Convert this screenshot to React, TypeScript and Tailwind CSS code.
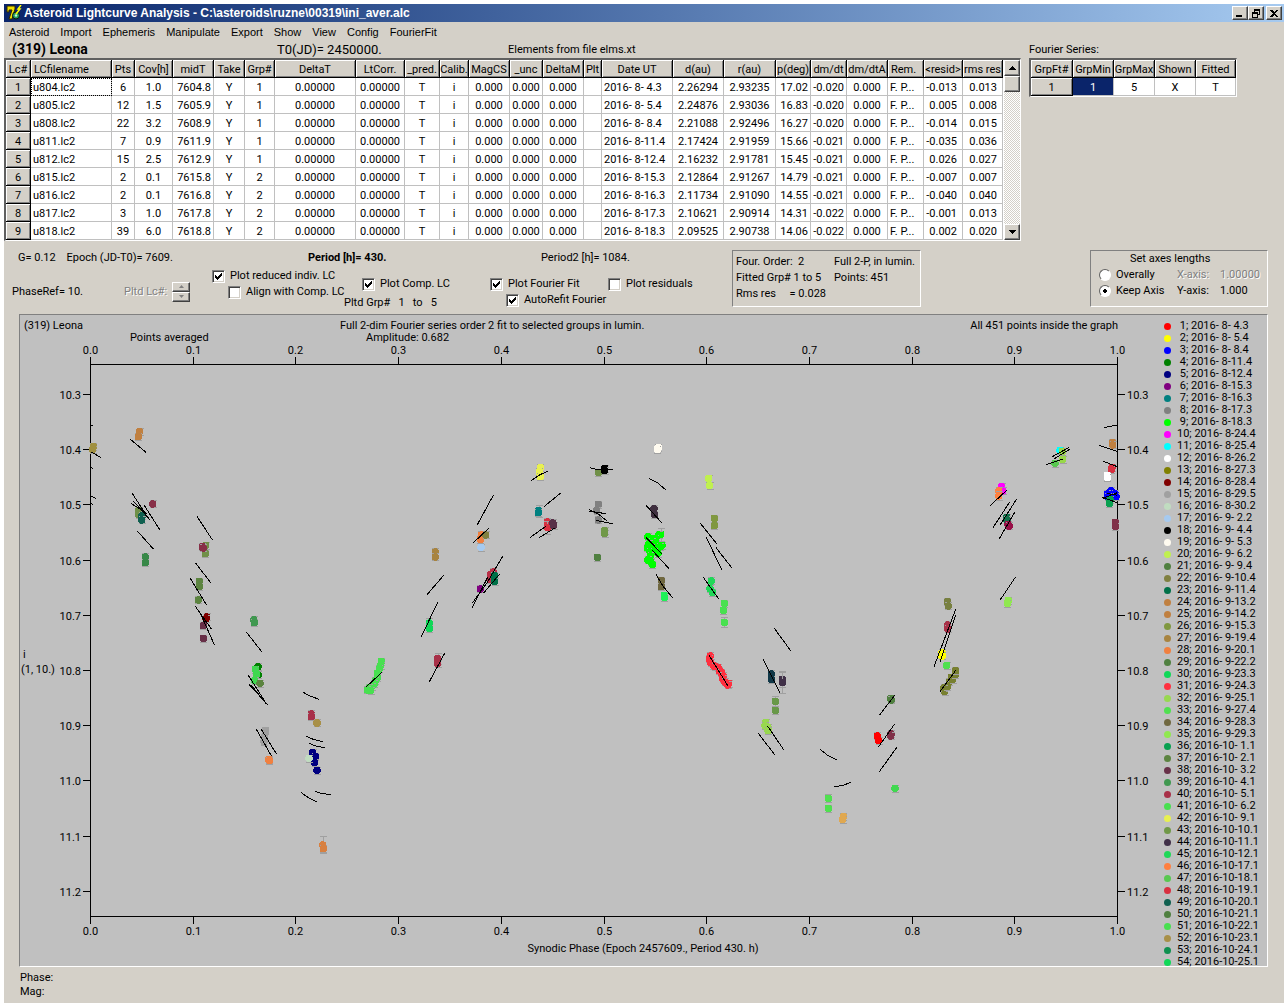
import React from 'react';

type Dot = [number, number, string, number?];
type Line = number[];

/* ---------- lightcurve table ---------- */

const headers = [
  'Lc#', 'LCfilename', 'Pts', 'Cov[h]', 'midT', 'Take', 'Grp#', 'DeltaT', 'LtCorr.', '_pred.', 'Calib.', 'MagCS',
  '_unc', 'DeltaM', 'Plt', 'Date UT', 'd(au)', 'r(au)', 'p(deg)', 'dm/dt', 'dm/dtA', 'Rem.', '<resid>', 'rms res',
];
const colWidths = [25, 81, 23, 38, 41, 31, 30, 81, 49, 35, 29, 41, 33, 41, 18, 71, 51, 52, 35, 36, 41, 36, 39, 40];

const lcRows = [
  ['u804.lc2', '6', '1.0', '7604.8', '1', '2016- 8- 4.3', '2.26294', '2.93235', '17.02', '-0.020', '-0.013', '0.013'],
  ['u805.lc2', '12', '1.5', '7605.9', '1', '2016- 8- 5.4', '2.24876', '2.93036', '16.83', '-0.020', '0.005', '0.008'],
  ['u808.lc2', '22', '3.2', '7608.9', '1', '2016- 8- 8.4', '2.21088', '2.92496', '16.27', '-0.020', '-0.014', '0.015'],
  ['u811.lc2', '7', '0.9', '7611.9', '1', '2016- 8-11.4', '2.17424', '2.91959', '15.66', '-0.021', '-0.035', '0.036'],
  ['u812.lc2', '15', '2.5', '7612.9', '1', '2016- 8-12.4', '2.16232', '2.91781', '15.45', '-0.021', '0.026', '0.027'],
  ['u815.lc2', '2', '0.1', '7615.8', '2', '2016- 8-15.3', '2.12864', '2.91267', '14.79', '-0.021', '-0.007', '0.007'],
  ['u816.lc2', '2', '0.1', '7616.8', '2', '2016- 8-16.3', '2.11734', '2.91090', '14.55', '-0.021', '-0.040', '0.040'],
  ['u817.lc2', '3', '1.0', '7617.8', '2', '2016- 8-17.3', '2.10621', '2.90914', '14.31', '-0.022', '-0.001', '0.013'],
  ['u818.lc2', '39', '6.0', '7618.8', '2', '2016- 8-18.3', '2.09525', '2.90738', '14.06', '-0.022', '0.002', '0.020'],
].map(([file, pts, cov, mid, grp, date, d, r, p, dm, resid, rms], i) => [
  String(i + 1), file, pts, cov, mid, 'Y', grp, '0.00000', '0.00000', 'T', 'i', '0.000', '0.000', '0.000', '',
  date, d, r, p, dm, '0.000', 'F. P...', resid, rms,
]);

const cellAlign = (c: number) => {
  if (c === 1 || c === 15 || c === 21) return 'text-left pl-[2px]';
  if (c === 4 || c === 18 || c === 19) return 'text-right pr-[2px]';
  if (c === 22 || c === 23) return 'text-right pr-[5px]';
  return 'text-center';
};

const fixedCell =
  'overflow-hidden whitespace-nowrap border-r border-b border-black bg-[#d4d0c8] p-0 pt-[2px] text-center font-normal shadow-[inset_1px_1px_#fff,inset_-1px_-1px_#808080]';
const dataCell = 'overflow-hidden whitespace-nowrap border-r border-b border-[#c0c0c0] bg-white p-0 pt-[2px]';
const raised = 'border border-t-white border-l-white border-r-[#404040] border-b-[#404040] bg-[#d4d0c8] shadow-[inset_-1px_-1px_#808080]';

function LightcurveTable() {
  return (
    <div className="flex border-t-2 border-l-2 border-r border-b border-t-[#606060] border-l-[#606060] border-r-white border-b-white bg-white">
      <table className="table-fixed border-separate border-spacing-0 leading-[15px]">
        <colgroup>
          {colWidths.map((w, i) => (
            <col key={i} style={{ width: w }} />
          ))}
        </colgroup>
        <thead>
          <tr className="h-[18px]">
            {headers.map((h, c) => (
              <th key={h} scope="col" className={fixedCell}>
                <span className={c === 1 || c === 21 ? 'block pl-[3px] text-left' : ''}>{h}</span>
              </th>
            ))}
          </tr>
        </thead>
        <tbody>
          {lcRows.map((row, r) => (
            <tr key={r} className="h-[18px]">
              {row.map((v, c) =>
                c === 0 ? (
                  <th key={c} scope="row" className={fixedCell}>
                    {v}
                  </th>
                ) : (
                  <td key={c} className={`${dataCell} ${cellAlign(c)} ${r === 0 && c === 1 ? 'outline-1 -outline-offset-1 outline-dotted outline-black' : ''}`}>
                    {v}
                  </td>
                ),
              )}
            </tr>
          ))}
        </tbody>
      </table>
      <div className="ml-px flex w-4 flex-col bg-[repeating-conic-gradient(#fff_0_25%,#d4d0c8_0_50%)] bg-[length:2px_2px]">
        <button aria-label="Scroll up" className={`flex h-4 items-center justify-center ${raised}`}>
          <svg width="7" height="4" shapeRendering="crispEdges"><path d="M0 4L3.5 0L7 4z" /></svg>
        </button>
        <div className={`h-4 ${raised}`} />
        <button aria-label="Scroll down" className={`mt-auto flex h-4 items-center justify-center ${raised}`}>
          <svg width="7" height="4" shapeRendering="crispEdges"><path d="M0 0L3.5 4L7 0z" /></svg>
        </button>
      </div>
    </div>
  );
}

function FourierTable() {
  const widths = [42, 41, 41, 41, 40];
  return (
    <div className="w-fit border-t-2 border-l-2 border-r border-b border-t-[#606060] border-l-[#606060] border-r-white border-b-white">
      <table aria-label="Fourier Series" className="table-fixed border-separate border-spacing-0 leading-[15px]">
        <colgroup>
          {widths.map((w, i) => (
            <col key={i} style={{ width: w }} />
          ))}
        </colgroup>
        <thead>
          <tr className="h-[18px]">
            {['GrpFt#', 'GrpMin', 'GrpMax', 'Shown', 'Fitted'].map((h) => (
              <th key={h} scope="col" className={fixedCell}>{h}</th>
            ))}
          </tr>
        </thead>
        <tbody>
          <tr className="h-[18px]">
            <th scope="row" className={fixedCell}>1</th>
            <td className="border-r border-b border-[#c0c0c0] bg-[#0a246a] p-0 pt-[2px] text-center text-white">1</td>
            {['5', 'X', 'T'].map((v) => (
              <td key={v} className={`${dataCell} text-center`}>{v}</td>
            ))}
          </tr>
        </tbody>
      </table>
    </div>
  );
}

/* ---------- controls ---------- */

function Check({ label, checked = false, className = '' }: { label: string; checked?: boolean; className?: string }) {
  return (
    <label className={`flex h-4 items-center gap-[5px] whitespace-nowrap ${className}`}>
      <span className="relative size-[13px]">
        <input
          type="checkbox"
          defaultChecked={checked}
          className="peer block size-[13px] appearance-none border border-t-[#808080] border-l-[#808080] border-r-white border-b-white bg-white shadow-[inset_1px_1px_#404040,inset_-1px_-1px_#d4d0c8]"
        />
        <svg className="pointer-events-none absolute top-[3px] left-[3px] hidden peer-checked:block" width="7" height="7" shapeRendering="crispEdges">
          <path d="M0 2h1v1h1v1h1v-1h1v-1h1v-1h1v-1h1v3h-1v1h-1v1h-1v1h-1v1h-1v-1h-1v-1h-1z" />
        </svg>
      </span>
      {label}
    </label>
  );
}

function Radio({ label, checked = false }: { label: string; checked?: boolean }) {
  return (
    <label className="flex w-[78px] items-center gap-[5px]">
      <input
        type="radio"
        name="axes"
        defaultChecked={checked}
        className="size-3 appearance-none rounded-full border border-t-[#606060] border-l-[#606060] border-r-white border-b-white bg-white checked:bg-[radial-gradient(#000_2px,#fff_2px)]"
      />
      {label}
    </label>
  );
}

function Controls() {
  return (
    <section className="flex items-start pt-[9px] pb-[3px]">
      <div className="flex-1">
        <div className="flex h-4 leading-4 whitespace-pre">
          <span className="ml-[14px] w-[290px]">G= 0.12    Epoch (JD-T0)= 7609.</span>
          <b className="w-[233px]">Period [h]= 430.</b>
          <span>Period2 [h]= 1084.</span>
        </div>
        <div className="mt-[2px] flex leading-4">
          <div className="ml-2 flex w-[200px] items-center pt-1">
            <span className="w-28">PhaseRef= 10.</span>
            <span className="w-12 text-[#808080] [text-shadow:1px_1px_#fff]">Pltd Lc#:</span>
            <span className="flex flex-col">
              <button disabled aria-label="Next lightcurve" className={`flex h-[10px] w-[18px] items-center justify-center ${raised}`}>
                <svg width="5" height="3"><path d="M0 3L2.5 0L5 3z" fill="#808080" /></svg>
              </button>
              <button disabled aria-label="Previous lightcurve" className={`flex h-[10px] w-[18px] items-center justify-center ${raised}`}>
                <svg width="5" height="3"><path d="M0 0L2.5 3L5 0z" fill="#808080" /></svg>
              </button>
            </span>
          </div>
          <div className="w-[132px]">
            <Check label="Plot reduced indiv. LC" checked />
            <Check label="Align with Comp. LC" className="ml-4" />
          </div>
          <div className="w-[146px] pt-2">
            <Check label="Plot Comp. LC" checked className="ml-[18px]" />
            <div className="pt-[3px] whitespace-pre">Pltd Grp#   1   to   5</div>
          </div>
          <div className="w-[118px] pt-2">
            <Check label="Plot Fourier Fit" checked />
            <Check label="AutoRefit Fourier" checked className="ml-4" />
          </div>
          <div className="pt-2">
            <Check label="Plot residuals" />
          </div>
        </div>
      </div>
      <div className="mr-[169px] grid h-[57px] w-[189px] grid-cols-[98px_1fr] content-start border border-t-[#808080] border-l-[#808080] border-r-white border-b-white pt-[3px] pl-[3px] leading-4 whitespace-pre">
        <span>Four. Order:  2</span>
        <span>Full 2-P, in lumin.</span>
        <span>Fitted Grp# 1 to 5</span>
        <span>Points: 451</span>
        <span>Rms res     = 0.028</span>
      </div>
      <fieldset className="mr-4 h-[57px] w-[178px] border border-t-[#808080] border-l-[#808080] border-r-white border-b-white pl-2 leading-4">
        <div className="pl-[31px]">Set axes lengths</div>
        <div className="flex text-[#808080] [text-shadow:1px_1px_#fff]">
          <span className="text-black [text-shadow:none]"><Radio label="Overally" /></span>
          <span className="w-[43px]">X-axis:</span>1.00000
        </div>
        <div className="flex">
          <Radio label="Keep Axis" checked />
          <span className="w-[43px]">Y-axis:</span>1.000
        </div>
      </fieldset>
    </section>
  );
}

/* ---------- chart data ---------- */

// Points and curves are digitised in thirds of a pixel relative to the corner of each plot sector.
const sectors: { x: number; y: number; dots: Dot[]; lines: Line[] }[] = [
  {
    x: 10, y: 310,
    dots: [
      [389, 365, '#c08040'], [385, 380, '#c08040'], [250, 410, '#a09040'], [248, 418, '#a09040'], [428, 582, '#883048'],
      [386, 602, '#709048'], [386, 614, '#709048'], [396, 618, '#106050'], [395, 630, '#106050'], [406, 741, '#388848'],
      [406, 758, '#388848'], [587, 706, '#709048'], [586, 731, '#709048'], [577, 710, '#883048'], [580, 714, '#883048'],
    ],
    lines: [
      [361, 388, 409, 428], [242, 425, 272, 442], [242, 346, 248, 346], [242, 473, 249, 475], [242, 558, 257, 565],
      [242, 578, 249, 584], [366, 549, 419, 631], [363, 580, 411, 611], [370, 573, 416, 625], [402, 585, 449, 659],
      [382, 663, 431, 718], [561, 619, 608, 691],
    ],
  },
  {
    x: 10, y: 560,
    dots: [
      [568, 64, '#5c8440'], [568, 79, '#5c8440'], [565, 120, '#5c8440'], [590, 171, '#800000'], [588, 176, '#800000'],
      [580, 197, '#683048'], [580, 235, '#683048'], [731, 180, '#409850'], [733, 188, '#409850'], [744, 320, '#008000'],
      [744, 345, '#008000'], [736, 328, '#40d850'], [740, 343, '#40d850'], [734, 362, '#40d850'], [750, 370, '#5c8440'],
      [904, 462, '#a83048'], [904, 470, '#a83048'], [921, 489, '#a89048'], [766, 512, '#a0a0a0'], [764, 530, '#a0a0a0'],
      [762, 545, '#a0a0a0'], [776, 598, '#f08040'], [778, 602, '#f08040'], [908, 578, '#000080'], [916, 590, '#000080'],
      [914, 608, '#000080'], [921, 631, '#000080'], [897, 595, '#c0dcc0'], [938, 855, '#d88040', 26], [940, 866, '#d88040'],
    ],
    lines: [
      [556, 8, 602, 68], [541, 55, 590, 136], [556, 139, 605, 208], [570, 158, 614, 256], [709, 216, 755, 275],
      [715, 346, 762, 420], [718, 374, 773, 434], [724, 376, 768, 430], [880, 397, 900, 408, 927, 418],
      [888, 529, 910, 538, 938, 545], [897, 550, 920, 559, 944, 563], [739, 508, 785, 589], [754, 508, 800, 583],
      [873, 697, 895, 713, 920, 725], [916, 694, 936, 701, 962, 703],
    ],
  },
  {
    x: 340, y: 400,
    dots: [
      [601, 203, '#e8f050'], [598, 215, '#e8f050'], [601, 230, '#e8f050'], [596, 332, '#008080', 18], [595, 338, '#008080'],
      [622, 366, '#d83040'], [622, 382, '#d83040', 20], [638, 369, '#583048'], [641, 376, '#583048'], [286, 456, '#a88440'],
      [286, 471, '#a88440'], [424, 405, '#f08040'], [421, 418, '#f08040'], [437, 405, '#808040'], [423, 442, '#a6caf0'],
      [460, 516, '#b83048'], [452, 524, '#b83048'], [450, 538, '#b83048'], [463, 527, '#007048'], [464, 545, '#007048'],
      [421, 567, '#800080'], [268, 669, '#10d858', 16], [268, 685, '#10d858'], [293, 776, '#a83048', 16], [293, 790, '#a83048'],
      [124, 784, '#48e050'], [122, 796, '#48e050'], [118, 806, '#48e050'], [112, 820, '#48e050'], [112, 832, '#48e050'],
      [106, 842, '#48e050'], [102, 852, '#48e050'], [95, 860, '#48e050'], [86, 864, '#48e050'], [82, 870, '#48e050'],
      [92, 872, '#48e050'], [775, 313, '#808080'], [770, 332, '#808080'], [775, 360, '#808080'], [775, 217, '#709048'],
      [794, 205, '#000'], [794, 212, '#000'], [794, 392, '#709848'], [794, 400, '#709848'], [772, 472, '#508040'],
    ],
    lines: [
      [412, 374, 461, 284], [400, 428, 446, 385], [261, 584, 311, 526], [244, 710, 293, 607], [268, 845, 314, 760],
      [79, 860, 126, 817], [396, 623, 444, 530], [397, 609, 440, 550, 488, 469], [430, 580, 479, 522],
      [573, 242, 600, 224, 623, 214], [612, 320, 662, 279], [570, 413, 617, 379], [597, 413, 645, 384],
      [750, 203, 768, 208, 818, 209], [747, 333, 797, 341], [747, 328, 775, 342, 800, 362], [768, 361, 818, 371],
    ],
  },
  {
    x: 580, y: 400,
    dots: [
      [235, 143, '#fffbf0'], [232, 148, '#fffbf0'], [386, 235, '#c0f050'], [389, 257, '#c0f050'], [222, 326, '#403040'],
      [223, 343, '#403040'], [403, 355, '#809840'], [403, 377, '#809840'], [204, 411, '#0f0'], [242, 403, '#0f0', 20],
      [236, 405, '#0f0'], [225, 415, '#0f0'], [216, 425, '#0f0'], [206, 432, '#0f0'], [228, 430, '#0f0'], [202, 443, '#0f0'],
      [214, 442, '#0f0'], [246, 436, '#0f0'], [240, 440, '#0f0'], [210, 455, '#0f0'], [222, 455, '#0f0'], [234, 460, '#0f0'],
      [212, 468, '#0f0'], [204, 480, '#0f0'], [212, 485, '#0f0'], [217, 493, '#0f0'], [244, 541, '#706840'],
      [244, 560, '#706840'], [253, 586, '#20f058'], [253, 592, '#20f058'], [394, 543, '#20d858'], [390, 566, '#20d858'],
      [397, 577, '#20d858'], [433, 610, '#48e050'], [430, 631, '#48e050'], [433, 667, '#48e050', 15], [391, 768, '#ff3040'],
      [388, 776, '#ff3040'], [392, 788, '#ff3040'], [400, 796, '#ff3040'], [406, 800, '#ff3040'], [414, 802, '#ff3040'],
      [418, 812, '#ff3040'], [424, 818, '#ff3040'], [430, 828, '#ff3040'], [428, 836, '#ff3040'], [434, 846, '#ff3040'],
      [446, 850, '#ff3040'], [443, 855, '#ff3040'], [574, 822, '#103848'], [574, 838, '#103848'], [607, 838, '#403048', 22],
      [607, 847, '#403048', 33],
    ],
    lines: [
      [207, 235, 232, 248, 257, 269], [198, 316, 245, 368], [361, 370, 410, 431], [379, 412, 425, 509], [408, 443, 455, 503],
      [199, 413, 245, 461], [216, 450, 267, 506], [228, 523, 250, 560, 278, 593], [370, 532, 416, 597], [387, 766, 444, 858],
      [583, 685, 632, 752], [550, 778, 600, 879],
    ],
  },
  {
    x: 580, y: 640,
    dots: [
      [586, 184, '#689848', 15], [586, 211, '#689848'], [557, 247, '#98d850'], [555, 257, '#98d850'], [564, 262, '#98d850'],
      [564, 272, '#98d850'], [745, 475, '#50e050', 12], [745, 505, '#50e050'], [790, 530, '#e0a850'], [788, 538, '#e0a850'],
    ],
    lines: [
      [535, 280, 584, 344], [562, 257, 611, 329], [720, 328, 742, 345, 770, 359], [762, 440, 790, 436, 812, 427],
    ],
  },
  {
    x: 830, y: 380,
    dots: [
      [515, 320, '#f0f'], [518, 333, '#f0f'], [506, 333, '#ff8040'], [506, 348, '#ff8040', 14], [530, 412, '#107048'],
      [531, 420, '#107048'], [534, 433, '#981048'], [537, 438, '#981048'], [690, 211, '#0ff'], [697, 214, '#98d848'],
      [698, 238, '#98d848'], [675, 250, '#58c850'], [847, 188, '#c08040'], [848, 195, '#c08040'], [846, 262, '#d83040'],
      [844, 268, '#d83040'], [832, 286, '#fff'], [832, 292, '#fff'], [843, 332, '#00f'], [832, 342, '#00f'], [855, 342, '#00f'],
      [845, 350, '#00f'], [835, 350, '#00f'], [858, 350, '#00f'], [840, 358, '#08a050'], [838, 370, '#08a050'],
      [856, 427, '#803048'], [856, 439, '#803048'], [535, 661, '#90e850'], [532, 670, '#90e850'], [352, 665, '#788040'],
      [355, 678, '#788040'],
    ],
    lines: [
      [480, 377, 530, 331], [489, 443, 539, 366], [511, 434, 560, 357], [508, 476, 554, 397], [511, 659, 556, 592],
      [648, 254, 698, 237], [667, 230, 716, 203], [673, 236, 719, 208], [822, 143, 838, 139, 862, 136],
      [808, 196, 862, 214], [820, 244, 862, 260], [816, 352, 862, 368], [818, 355, 862, 338], [830, 340, 862, 346],
    ],
  },
  {
    x: 830, y: 590,
    dots: [
      [353, 105, '#a83048'], [353, 117, '#a83048'], [336, 188, '#ff0'], [336, 198, '#ff0'], [350, 226, '#50e050'],
      [344, 304, '#788030'], [342, 294, '#788030'], [352, 290, '#788030'], [358, 276, '#788030'], [364, 262, '#788030'],
      [368, 268, '#788030'], [376, 254, '#788030'], [376, 242, '#788030'], [182, 325, '#508040'], [184, 330, '#508040'],
      [142, 438, '#f00'], [146, 452, '#f00'], [183, 432, '#803048'], [182, 438, '#803048'], [195, 595, '#40d850'],
    ],
    lines: [[312, 230, 377, 58], [330, 215, 377, 74], [330, 305, 378, 240], [148, 376, 194, 316], [146, 470, 194, 402], [148, 545, 202, 470]],
  },
];

const third = (o: number, v: number) => o + v / 3;

function PlotMarks() {
  return (
    <>
      {sectors.map((s, i) => (
        <g key={i}>
          {s.dots.map(([x, y, c, e = 11], k) => (
            <g key={k} shapeRendering="crispEdges">
              <path
                d={`M${Math.round(third(s.x, x)) - 3} ${Math.round(third(s.y, y - e)) + 0.5}h7m-7 ${Math.round((2 * e) / 3)}h7m-3.5 0v-${Math.round((2 * e) / 3)}`}
                stroke="#a0a0a0"
                fill="none"
              />
              <circle cx={third(s.x, x)} cy={third(s.y, y)} r="3.8" fill={c} />
            </g>
          ))}
        </g>
      ))}
      {sectors.map((s, i) => (
        <g key={i} stroke="#000" fill="none" shapeRendering="crispEdges">
          {s.lines.map((l, k) => (
            <polyline key={k} points={l.map((v, j) => third(j % 2 ? s.y : s.x, v)).join(' ')} />
          ))}
        </g>
      ))}
    </>
  );
}

function Chart() {
  const xs = Array.from({ length: 11 }, (_, i) => Math.round(90 + i * 102.7) + 0.5);
  const ys = Array.from({ length: 10 }, (_, i) => Math.round(394 + i * 55.2) + 0.5);
  return (
    <svg viewBox="20 315 1140 650" className="min-w-0 flex-1" fontSize="11" role="img" aria-label="Composite lightcurve">
      <text x="24" y="329">(319) Leona</text>
      <text x="130" y="341">Points averaged</text>
      <text x="340" y="329">Full 2-dim Fourier series order 2 fit to selected groups in lumin.</text>
      <text x="366" y="341">Amplitude: 0.682</text>
      <text x="1118" y="329" textAnchor="end">All 451 points inside the graph</text>
      <text x="23" y="658">i</text>
      <text x="21" y="673">(1, 10.)</text>
      <text x="643" y="952" textAnchor="middle">Synodic Phase (Epoch 2457609., Period 430. h)</text>
      <path d="M90.5 357V924M1117.5 357V924M90 364.5H1118M90 916.5H1118" stroke="#000" fill="none" shapeRendering="crispEdges" />
      {xs.map((x, i) => (
        <g key={i} textAnchor="middle">
          <path d={`M${x} 357v7M${x} 917v7`} stroke="#000" shapeRendering="crispEdges" />
          <text x={x} y="354">{(i / 10).toFixed(1)}</text>
          <text x={x} y="935">{(i / 10).toFixed(1)}</text>
        </g>
      ))}
      {ys.map((y, i) => (
        <g key={i}>
          <path d={`M83 ${y}h7M1118 ${y}h7`} stroke="#000" shapeRendering="crispEdges" />
          <text x="81" y={y + 4} textAnchor="end">{(10.3 + i / 10).toFixed(1)}</text>
          <text x="1127" y={y + 4}>{(10.3 + i / 10).toFixed(1)}</text>
        </g>
      ))}
      <PlotMarks />
    </svg>
  );
}

const legend: [string, string][] = [
  ['8- 4.3', '#ff0000'], ['8- 5.4', '#ffff00'], ['8- 8.4', '#0000ff'], ['8-11.4', '#008000'], ['8-12.4', '#000080'],
  ['8-15.3', '#800080'], ['8-16.3', '#008080'], ['8-17.3', '#808080'], ['8-18.3', '#00ff00'], ['8-24.4', '#ff00ff'],
  ['8-25.4', '#00ffff'], ['8-26.2', '#ffffff'], ['8-27.3', '#808000'], ['8-28.4', '#800000'], ['8-29.5', '#a0a0a0'],
  ['8-30.2', '#c0dcc0'], ['9- 2.2', '#a6caf0'], ['9- 4.4', '#000000'], ['9- 5.3', '#fffbf0'], ['9- 6.2', '#c0f050'],
  ['9- 9.4', '#508040'], ['9-10.4', '#808040'], ['9-11.4', '#007048'], ['9-13.2', '#c08040'], ['9-14.2', '#c08040'],
  ['9-15.3', '#809840'], ['9-19.4', '#a88440'], ['9-20.1', '#f08040'], ['9-22.2', '#508040'], ['9-23.3', '#10d858'],
  ['9-24.3', '#ff3040'], ['9-25.1', '#98d850'], ['9-27.4', '#50e050'], ['9-28.3', '#706840'], ['9-29.3', '#90e850'],
  ['10- 1.1', '#08a050'], ['10- 2.1', '#5c8440'], ['10- 3.2', '#683048'], ['10- 4.1', '#409850'], ['10- 5.1', '#a83048'],
  ['10- 6.2', '#48e050'], ['10- 9.1', '#e8f050'], ['10-10.1', '#709848'], ['10-11.1', '#403048'], ['10-12.1', '#20d858'],
  ['10-17.1', '#ff8040'], ['10-18.1', '#58c850'], ['10-19.1', '#d83040'], ['10-20.1', '#106050'], ['10-21.1', '#508040'],
  ['10-22.1', '#48e050'], ['10-23.1', '#a89048'], ['10-24.1', '#109050'], ['10-25.1', '#10d858'],
];

function Legend() {
  return (
    <ol className="-mb-[2px] w-[107px] shrink-0 pt-[5px]">
      {legend.map(([date, color], i) => (
        <li key={i} className="flex h-3 items-center gap-[6px] pl-1 leading-3 whitespace-pre">
          <svg width="7" height="7"><circle cx="3.5" cy="3.5" r="3.5" fill={color} /></svg>
          {`${i < 9 ? ' ' : ''}${i + 1}; 2016-${date.startsWith('1') ? '' : ' '}${date}`}
        </li>
      ))}
    </ol>
  );
}

/* ---------- window ---------- */

const menu = ['Asteroid', 'Import', 'Ephemeris', 'Manipulate', 'Export', 'Show', 'View', 'Config', 'FourierFit'];

function AppIcon() {
  return (
    <svg width="16" height="16" viewBox="0 0 16 16">
      <path d="M1 1h8v3L6 14H3L6 5H3v2H1z" fill="#f0e000" stroke="#302800" />
      <circle cx="10" cy="10.5" r="3.5" fill="#20a060" stroke="#101010" />
      <circle cx="10" cy="10.5" r="1.2" fill="#c8f0d0" />
      <path d="M15 0l-3 4h2l-4 5" fill="none" stroke="#ff0" strokeWidth="1.5" />
    </svg>
  );
}

export default function App() {
  const winBtn = `flex h-[14px] w-4 items-center justify-center ${raised}`;
  return (
    <div className="min-h-screen bg-white px-1 pt-1 font-[Roboto,'Liberation_Sans',sans-serif] text-[11px] text-black">
      <div className="bg-[#d4d0c8] pb-1">
        <header className="flex h-[18px] items-center gap-[2px] bg-gradient-to-r from-[#0a246a] to-[#a6caf0] pr-[2px] pl-[2px]">
          <AppIcon />
          <h1 className="flex-1 pt-px font-['Liberation_Sans',sans-serif] text-[12px] leading-[17px] font-bold text-white">
            Asteroid Lightcurve Analysis - C:\asteroids\ruzne\00319\ini_aver.alc
          </h1>
          <div className="flex">
            <button aria-label="Minimize" className={winBtn}>
              <svg width="8" height="8" shapeRendering="crispEdges"><path d="M0 6h6v2H0z" /></svg>
            </button>
            <button aria-label="Restore" className={winBtn}>
              <svg width="8" height="9" shapeRendering="crispEdges"><path d="M2 0h6v6H6V5h1V2H3v1H2zM0 3h6v6H0zM1 5v3h4V5z" fillRule="evenodd" /></svg>
            </button>
            <button aria-label="Close" className={`ml-[2px] ${winBtn}`}>
              <svg width="8" height="7" shapeRendering="crispEdges"><path d="M0 0h2l2 2l2-2h2L5 3.5L8 7H6L4 5L2 7H0l3-3.5z" /></svg>
            </button>
          </div>
        </header>
        <nav className="flex h-[19px] items-center gap-[11px] pt-px pl-[5px] font-['Liberation_Sans',sans-serif]">
          {menu.map((m) => (
            <button key={m}>{m}</button>
          ))}
        </nav>

        <section className="flex">
          <div className="shrink-0">
            <div className="flex h-[17px] items-center leading-[17px] whitespace-nowrap">
              <b className="ml-2 w-[265px] text-[14px]">(319) Leona</b>
              <span className="w-[231px] text-[13px]">T0(JD)= 2450000.</span>
              <span>Elements from file elms.xt</span>
            </div>
            <LightcurveTable />
          </div>
          <div className="ml-2">
            <div className="h-[17px] leading-[17px]">Fourier Series:</div>
            <FourierTable />
          </div>
        </section>

        <Controls />

        <section className="mr-4 ml-[15px] flex items-start border border-t-[#808080] border-l-[#808080] border-r-white border-b-white bg-[#c0c0c0]">
          <Chart />
          <Legend />
        </section>

        <footer className="pt-1 pl-4 leading-[14px]">
          <p>Phase:</p>
          <p>Mag:</p>
        </footer>
      </div>
    </div>
  );
}
